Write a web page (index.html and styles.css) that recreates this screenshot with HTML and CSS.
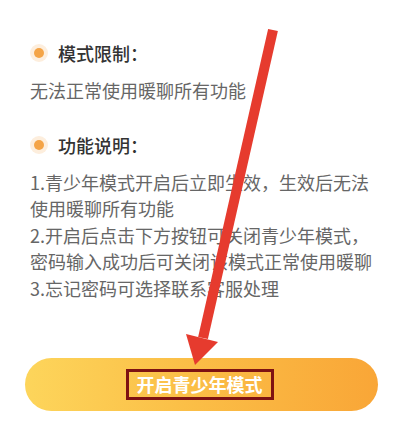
FILE: index.html
```html
<!DOCTYPE html>
<html lang="zh">
<head>
<meta charset="utf-8">
<link rel="stylesheet" href="styles.css">
</head>
<body>
<div class="page">
  <section class="block first">
    <h2 class="title"><span class="dot"></span>模式限制：</h2>
    <p class="text">无法正常使用暖聊所有功能</p>
  </section>
  <section class="block second">
    <h2 class="title"><span class="dot"></span>功能说明：</h2>
    <p class="text">1.青少年模式开启后立即生效，生效后无法<br>使用暖聊所有功能<br>2.开启后点击下方按钮可关闭青少年模式，<br>密码输入成功后可关闭该模式正常使用暖聊<br>3.忘记密码可选择联系客服处理</p>
  </section>
  <div class="btn-wrap">
    <div class="btn"><span class="btn-label">开启青少年模式</span></div>
  </div>
  <svg class="arrow" width="405" height="428" viewBox="0 0 405 428">
    <line x1="273" y1="30" x2="203" y2="338" stroke="#e63b2e" stroke-width="10"/>
    <polygon points="186,334 218,342 195,365" fill="#e63b2e"/>
  </svg>
</div>
</body>
</html>
```
FILE: styles.css
```css
html, body {
  margin: 0;
  padding: 0;
  background: #ffffff;
}
body {
  font-family: "Noto Sans CJK SC", "Noto Sans", sans-serif;
  width: 405px;
  height: 428px;
  overflow: hidden;
}
.page {
  position: relative;
  width: 405px;
  height: 428px;
  padding-top: 40px;
  box-sizing: border-box;
}
.block {
  padding: 0 30px;
}
.second {
  margin-top: 28px;
}
.title {
  display: flex;
  align-items: center;
  margin: 0;
  font-size: 18px;
  font-weight: 500;
  line-height: 26px;
  color: #333333;
}
.dot {
  width: 10px;
  height: 10px;
  border-radius: 50%;
  background: #f4a447;
  box-shadow: 0 0 0 4px #fdeedd;
  margin-left: 4px;
  margin-right: 14px;
}
.text {
  margin: 11px 0 0;
  font-size: 18px;
  line-height: 26.5px;
  color: #666666;
}
.btn-wrap {
  padding: 0 27px 0 25px;
  margin-top: 57px;
}
.btn {
  height: 53px;
  border-radius: 27px;
  background: linear-gradient(90deg, #fdd55b 0%, #fbbf47 45%, #f9a637 100%);
  display: flex;
  align-items: center;
  justify-content: center;
}
.btn-label {
  font-size: 18px;
  font-weight: 700;
  color: #ffffff;
  line-height: 25px;
  padding: 0 8px 0 8px;
  border: 3px solid #7e1212;
  margin-left: -4px;
}
.arrow {
  position: absolute;
  left: 0;
  top: 0;
  pointer-events: none;
}
```
